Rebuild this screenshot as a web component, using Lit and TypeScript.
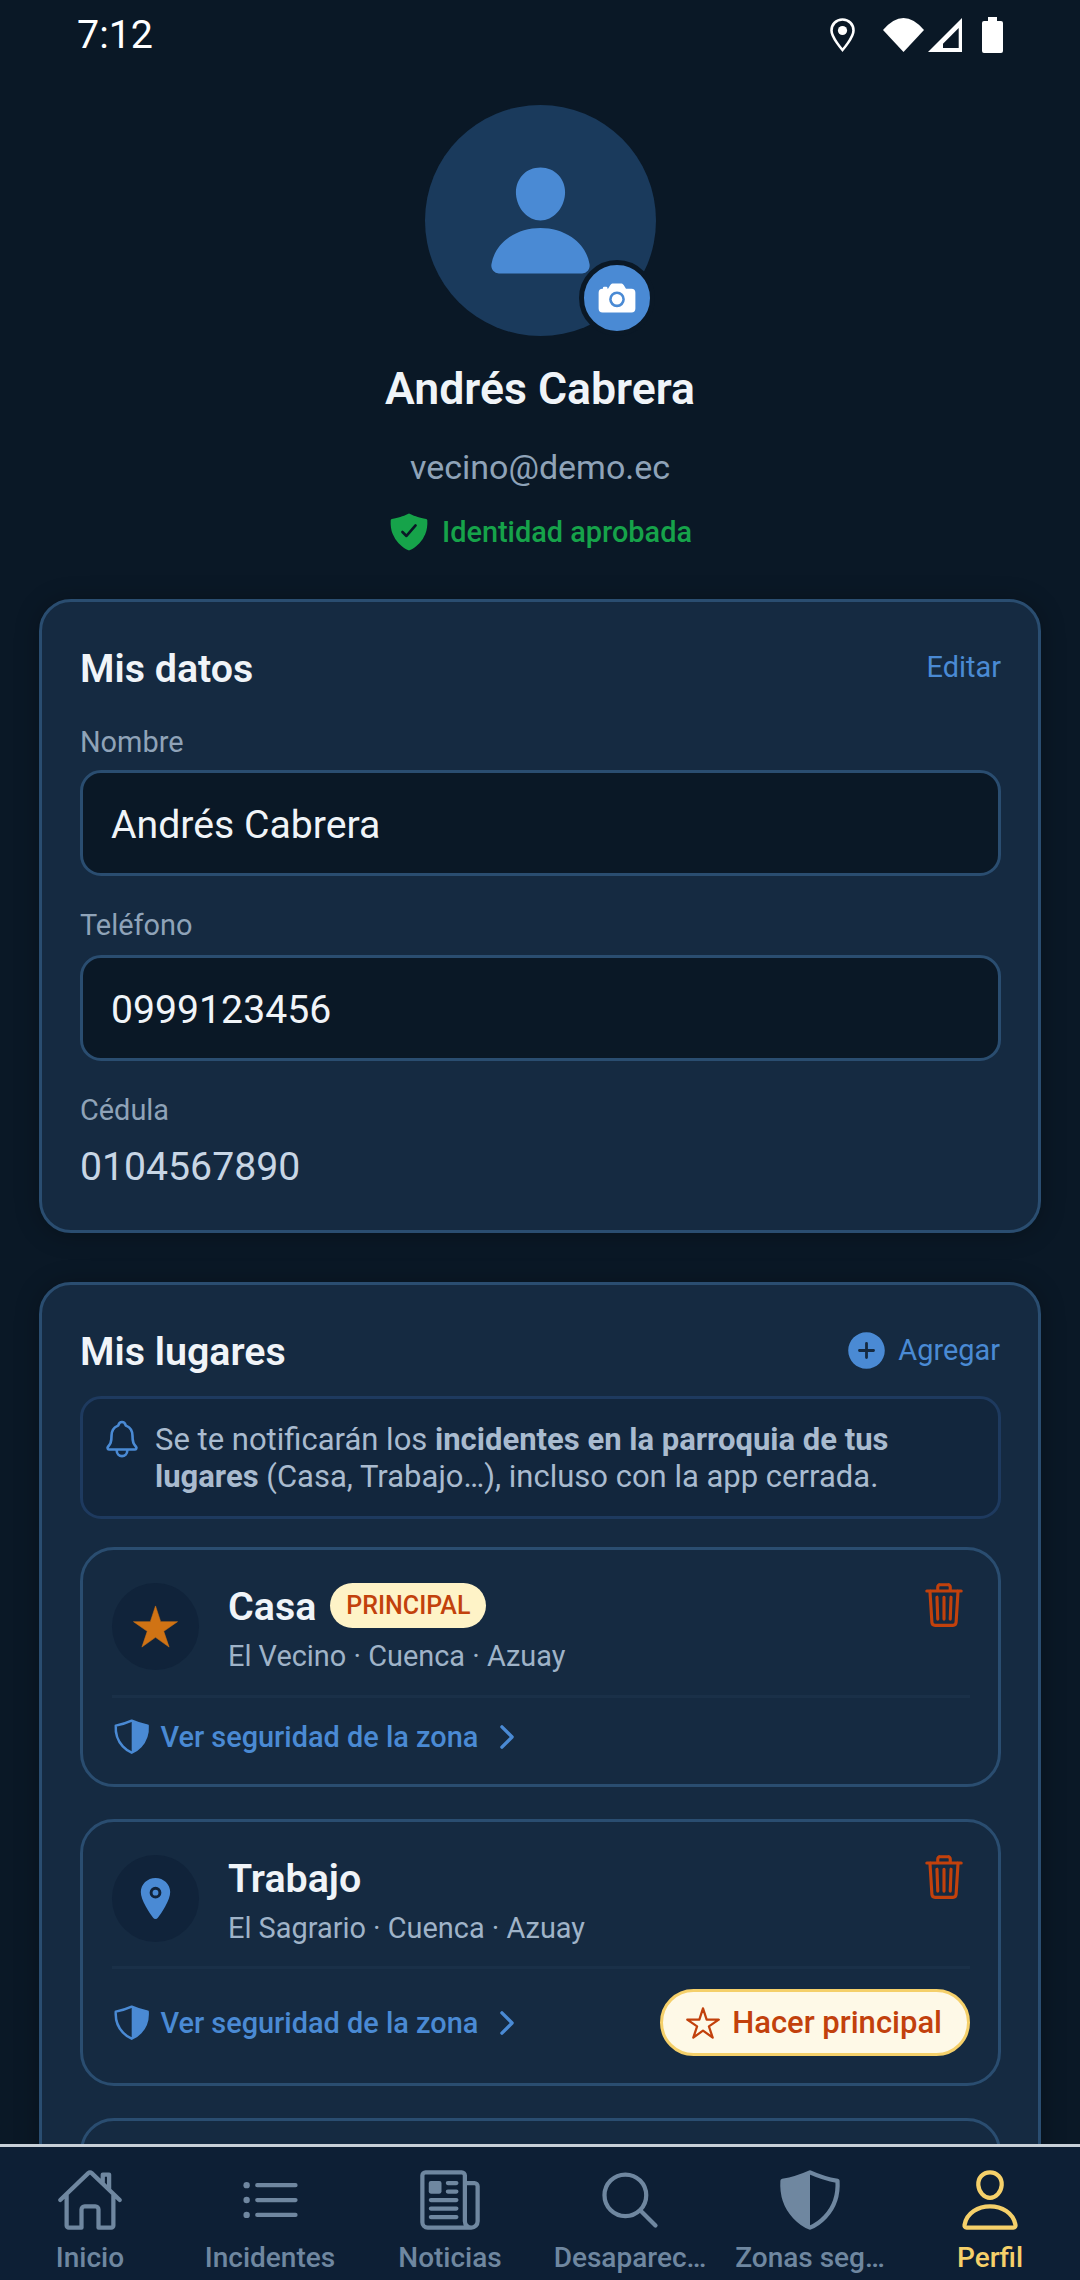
import { LitElement, html, css, svg } from "lit";
import { customElement } from "lit/decorators.js";

const ic = (size: number, body: unknown, cls = "") => html`<svg class="ic ${cls}" width=${size} height=${size} viewBox="0 0 512 512">${body}</svg>`;
const person = svg`<path fill="currentColor" d="M332.64 64.58C313.18 43.57 286 32 256 32c-30.16 0-57.43 11.5-76.8 32.38-19.58 21.11-29.12 49.8-26.88 80.78C156.76 206.28 203.27 256 256 256s99.16-49.71 103.67-110.82c2.27-30.7-7.33-59.33-27.03-80.6zM432 480H80a31 31 0 01-24.2-11.13c-6.5-7.77-9.12-18.38-7.18-29.11C57.06 392.94 83.4 353.61 124.8 326c36.78-24.51 83.37-38 131.2-38s94.42 13.5 131.2 38c41.4 27.6 67.74 66.93 76.18 113.75 1.94 10.73-.68 21.34-7.18 29.11A31 31 0 01432 480z"/>`;
const camera = svg`<circle cx="256" cy="272" r="64" fill="currentColor"/><path fill="currentColor" d="M432 144h-59c-3 0-6.72-1.94-9.62-5l-25.94-40.94a15.52 15.52 0 00-1.37-1.85C327.11 85.76 315 80 302 80h-92c-13 0-25.11 5.76-34.07 16.21a15.52 15.52 0 00-1.37 1.85l-25.94 41c-2.22 2.42-5.34 5-8.62 5v-8a16 16 0 00-16-16h-24a16 16 0 00-16 16v8h-4a48.05 48.05 0 00-48 48V384a48.05 48.05 0 0048 48h352a48.05 48.05 0 0048-48V192a48.05 48.05 0 00-48-48zM256 368a96 96 0 1196-96 96.11 96.11 0 01-96 96z"/>`;
const shieldCheck = svg`<path fill="currentColor" d="M479.07 111.36a16 16 0 00-13.15-14.74c-86.5-15.52-122.61-26.74-203.33-63.2a16 16 0 00-13.18 0C168.69 69.88 132.58 81.1 46.08 96.62a16 16 0 00-13.15 14.74c-3.85 61.11 4.36 118.05 24.43 169.24A349.47 349.47 0 00129 393.11c53.47 56.73 110.24 81.37 121.07 85.73a16 16 0 0012 0c10.83-4.36 67.6-29 121.07-85.73a349.47 349.47 0 0071.5-112.51c20.07-51.19 28.28-108.13 24.43-169.24zm-131 75.11l-110.8 128a16 16 0 01-11.41 5.53h-.66a16 16 0 01-11.2-4.57l-49.2-48.2a16 16 0 1122.4-22.86l37 36.29 99.7-115.13a16 16 0 0124.2 20.94z"/>`;
const addCircle = svg`<path fill="currentColor" d="M256 48C141.31 48 48 141.31 48 256s93.31 208 208 208 208-93.31 208-208S370.69 48 256 48zm80 224h-64v64a16 16 0 01-32 0v-64h-64a16 16 0 010-32h64v-64a16 16 0 0132 0v64h64a16 16 0 010 32z"/>`;
const S = `fill:none;stroke:currentColor;stroke-width:32;stroke-linecap:round;stroke-linejoin:round`;
const bell = svg`<path style=${S} d="M427.68 351.43C402 320 383.87 304 383.87 217.35 383.87 138 343.35 109.73 310 96c-4.43-1.82-8.6-6-9.95-10.55C294.2 65.54 277.8 48 256 48s-38.21 17.55-44 37.47c-1.35 4.6-5.52 8.71-9.95 10.53-33.39 13.75-73.87 41.92-73.87 121.35C128.13 304 110 320 84.32 351.43 73.68 364.45 83 384 101.61 384h308.88c18.51 0 27.77-19.61 17.19-32.57zM320 384v16a64 64 0 01-128 0v-16"/>`;
const trash = svg`<path style=${S} d="M112 112l20 320c.95 18.49 14.4 32 32 32h184c17.67 0 30.87-13.51 32-32l20-320M80 112h352M192 112V72h0a23.93 23.93 0 0124-24h80a23.93 23.93 0 0124 24h0v40M256 176v224M184 176l8 224M328 176l-8 224"/>`;
const star = svg`<path fill="currentColor" stroke="currentColor" stroke-width="6" stroke-linejoin="round" d="M496 203.3H312.36L256 32l-56.36 171.3H16l150.21 105.4L107.9 480 256 373.84 404.1 480l-58.41-171.3z"/>`;
const starOutline = svg`<path style=${S} d="M480 208H308L256 48l-52 160H32l140 96-54 160 138-100 138 100-54-160z"/>`;
const pin = svg`<circle cx="256" cy="192" r="32" fill="currentColor"/><path fill="currentColor" d="M256 32c-88.22 0-160 68.65-160 153 0 40.17 18.31 93.59 54.42 158.78 29 52.34 62.55 99.67 80 123.22a31.75 31.75 0 0051.22 0c17.42-23.55 51-70.88 80-123.22C397.69 278.61 416 225.19 416 185c0-84.35-71.78-153-160-153zm0 224a64 64 0 1164-64 64.07 64.07 0 01-64 64z"/>`;
const chevron = svg`<path style="fill:none;stroke:currentColor;stroke-width:48;stroke-linecap:round;stroke-linejoin:round" d="M184 112l144 144-144 144"/>`;
const shieldHalf = svg`<path style=${S} d="M463.1 112.37C373.68 96.33 336.71 84.45 256 48c-80.71 36.45-117.68 48.33-207.1 64.37C32.7 369.13 240.58 457.79 256 464c15.42-6.21 223.3-94.87 207.1-351.63z"/><path fill="currentColor" d="M256 48c-80.71 36.45-117.68 48.33-207.1 64.37C32.7 369.13 240.58 457.79 256 464z" transform="translate(512 0) scale(-1 1)"/>`;
const shieldHalfLeft = svg`<path style=${S} d="M463.1 112.37C373.68 96.33 336.71 84.45 256 48c-80.71 36.45-117.68 48.33-207.1 64.37C32.7 369.13 240.58 457.79 256 464c15.42-6.21 223.3-94.87 207.1-351.63z"/><path fill="currentColor" d="M256 48c-80.71 36.45-117.68 48.33-207.1 64.37C32.7 369.13 240.58 457.79 256 464z"/>`;
const home = svg`<path style=${S} d="M80 212v236a16 16 0 0016 16h96V328a24 24 0 0124-24h80a24 24 0 0124 24v136h96a16 16 0 0016-16V212M480 256L266.89 52c-5-5.28-16.69-5.34-21.78 0L32 256M400 179V64h-48v69"/>`;
const list = svg`<path style=${S} d="M160 144h288M160 256h288M160 368h288"/><circle cx="80" cy="144" r="24" fill="currentColor"/><circle cx="80" cy="256" r="24" fill="currentColor"/><circle cx="80" cy="368" r="24" fill="currentColor"/>`;
const news = svg`<path style=${S} d="M368 415.86V72a24.07 24.07 0 00-24-24H72a24.07 24.07 0 00-24 24v352a40.12 40.12 0 0040 40h328M416 464h0a48 48 0 01-48-48V128h72a24 24 0 0124 24v264a48 48 0 01-48 48zM240 128h64M240 192h64M112 256h192M112 320h192M112 384h192"/><path fill="currentColor" d="M176 208h-64a16 16 0 01-16-16v-64a16 16 0 0116-16h64a16 16 0 0116 16v64a16 16 0 01-16 16z"/>`;
const search = svg`<path style=${S} d="M221.09 64a157.09 157.09 0 10157.09 157.09A157.1 157.1 0 00221.09 64zM338.29 338.29L448 448"/>`;
const personOutline = svg`<path style=${S} d="M344 144c-3.92 52.87-44 96-88 96s-84.15-43.12-88-96c-4-55 35-96 88-96s92 42 88 96zM256 304c-87 0-175.3 48-191.64 138.6C62.39 453.52 68.57 464 80 464h352c11.44 0 17.62-10.48 15.65-21.4C431.3 352 343 304 256 304z"/>`;

const tabs = [
  { label: "Inicio", icon: home },
  { label: "Incidentes", icon: list },
  { label: "Noticias", icon: news },
  { label: "Desaparec…", icon: search },
  { label: "Zonas seg…", icon: shieldHalfLeft },
  { label: "Perfil", icon: personOutline, active: true },
];

@customElement("app-root")
export class AppRoot extends LitElement {
  static styles = css`
    :host { display: block; width: 1080px; height: 2280px; overflow: hidden; background: #0a1826; font-family: Roboto, "Liberation Sans", sans-serif; color: #fff; }
    * { box-sizing: border-box; }
    .ic { display: block; flex: none; }
    .screen { display: flex; flex-direction: column; height: 2280px; }
    .status { flex: none; height: 70px; display: flex; align-items: center; padding: 0 77px; justify-content: space-between; }
    .time { font-size: 39.4px; line-height: 72px; color: #fff; }
    .sicons { display: flex; align-items: center; gap: 4px; }
    .sicons .loc { margin-right: 24px; }
    .sicons .sig { margin-right: 16px; }
    .main { flex: 1; min-height: 0; overflow: hidden; }
    .profile { display: flex; flex-direction: column; align-items: center; padding-top: 35px; }
    .avatar { position: relative; width: 231px; height: 231px; border-radius: 50%; background: #1a3a5c; color: #4a8ad4; display: flex; align-items: center; justify-content: center; }
    .cam { position: absolute; left: 154px; top: 155px; width: 76px; height: 76px; border-radius: 50%; background: #4a8ad4; border: 5px solid #0a1826; color: #fff; display: flex; align-items: center; justify-content: center; }
    .name { margin-top: 22.5px; font-size: 44.6px; line-height: 60px; font-weight: 600; color: #f0f4f8; }
    .email { margin-top: 25px; font-size: 34px; line-height: 46px; color: #8fa3b8; }
    .verified { margin-top: 21.5px; display: flex; align-items: center; gap: 12px; color: #16a34a; font-size: 28.9px; font-weight: 500; line-height: 42px; }
    .card { margin: 0 39px; background: #152a41; border: 3px solid #2a4d70; border-radius: 32px; padding: 38px 37px 38px 38px; box-shadow: 0 2px 24px rgba(0, 0, 0, 0.28); }
    .card.c1 { margin-top: 46px; }
    .card.c2 { margin-top: 49px; padding-bottom: 0; }
    .head { display: flex; align-items: center; justify-content: space-between; height: 56px; }
    .c2 .head { height: 57px; }
    .title { font-size: 39.4px; font-weight: 600; color: #f0f4f8; }
    .edit { font-size: 28.9px; color: #4a8ad4; margin-top: -2px; }
    .add { display: flex; align-items: center; gap: 9px; font-size: 28.9px; color: #4a8ad4; margin: -3px 1px 0 0; }
    .label { font-size: 28.9px; line-height: 38px; color: #8fa3b8; }
    .label.first { margin-top: 27px; }
    .label.next { margin-top: 30px; }
    .input { margin-top: 9px; height: 106px; border: 3px solid #2a4d70; border-radius: 21px; background: #0a1826; display: flex; align-items: center; padding: 3px 28px 0; font-size: 39.2px; color: #f0f4f8; }
    .next + .input { margin-top: 11px; }
    .value { margin-top: 13px; font-size: 39.2px; line-height: 50px; color: #c8d6e5; }
    .info { margin-top: 16px; display: flex; gap: 12px; align-items: flex-start; background: #12263d; border: 3px solid #1e3a5f; border-radius: 21px; padding: 22px 60px 21px 18px; font-size: 31px; line-height: 37px; color: #a9bbcf; }
    .info .bell { color: #4a8ad4; margin-top: -3px; }
    .info b { font-weight: 700; }
    .places { display: flex; flex-direction: column; gap: 32px; margin-top: 28px; }
    .place { border: 3px solid #2a4d70; border-radius: 34px; padding: 33px 28px 27px 29px; }
    .place.last { height: 120px; }
    .row { display: flex; align-items: flex-start; }
    .circle { flex: none; width: 87px; height: 87px; border-radius: 50%; background: #10233a; display: flex; align-items: center; justify-content: center; color: #4a8ad4; }
    .circle.gold { color: #d07314; }
    .txt { flex: 1; margin-left: 29px; }
    .ptitle { display: flex; align-items: center; gap: 14px; font-size: 39.4px; line-height: 48px; font-weight: 600; color: #f0f4f8; }
    .badge { height: 45px; margin-top: -3px; padding: 0 16px; border-radius: 23px; background: #fef3c7; color: #c2410c; font-size: 25px; font-weight: 500; line-height: 45px; }
    .sub { margin-top: 11px; font-size: 28.9px; line-height: 28px; color: #9fb3c8; }
    .del { color: #c2410c; margin: -3px 1px 0 0; height: 50px; }
    .foot { margin-top: 24.5px; border-top: 3px solid #1a3048; padding-top: 20px; display: flex; align-items: center; justify-content: space-between; }
    .link { display: flex; align-items: center; color: #4a8ad4; font-size: 28.9px; font-weight: 500; height: 39px; }
    .link .t { margin: 0 11px 0 9px; }
    .btn { display: flex; align-items: center; gap: 11px; height: 67px; padding: 0 25px 0 22px; border: 3px solid #f5d06a; border-radius: 34px; background: #fef9e7; color: #c2410c; font-size: 31px; font-weight: 500; }
    .nav { flex: none; height: 136px; border-top: 3px solid #c8d0d8; background: #0d1f35; display: grid; grid-template-columns: repeat(6, 180px); padding-top: 19px; position: relative; }
    .tab { display: flex; flex-direction: column; align-items: center; color: #6f87a0; font-size: 28px; font-weight: 500; white-space: nowrap; }
    .tab.active { color: #f5d06a; }
    .tab span { margin-top: 4px; line-height: 40px; }
  `;

  place(icon: unknown, gold: boolean, name: string, badge: boolean, sub: string, action: boolean) {
    return html`<div class="place">
      <div class="row">
        <div class="circle ${gold ? "gold" : ""}">${ic(47, icon)}</div>
        <div class="txt">
          <div class="ptitle">${name}${badge ? html`<span class="badge">PRINCIPAL</span>` : ""}</div>
          <div class="sub">${sub}</div>
        </div>
        <div class="del">${ic(50, trash)}</div>
      </div>
      <div class="foot">
        <div class="link">${ic(39.4, shieldHalf)}<span class="t">Ver seguridad de la zona</span>${ic(36, chevron)}</div>
        ${action ? html`<div class="btn">${ic(36, starOutline)}Hacer principal</div>` : ""}
      </div>
    </div>`;
  }

  render() {
    return html`<div class="screen">
      <div class="status">
        <div class="time">7:12</div>
        <div class="sicons">
          <svg class="loc" width="25" height="34" viewBox="0 0 25 34"><path d="M12.5 1.5C6 1.5 1.5 6.5 1.5 12.5 1.5 19.5 12.5 32 12.5 32S23.5 19.5 23.5 12.5C23.5 6.5 19 1.5 12.5 1.5Z" fill="none" stroke="#fff" stroke-width="2.6"/><circle cx="12.5" cy="12.5" r="4.6" fill="#fff"/></svg>
          <svg width="41" height="34" viewBox="0 0 41 34"><path d="M20.5 34L0 12Q20.5-12 41 12Z" fill="#fff"/></svg>
          <svg class="sig" width="34" height="34" viewBox="0 0 34 34"><path fill="#fff" fill-rule="evenodd" d="M34 0V34H0ZM30.7 10V30H15V25.7Z"/></svg>
          <svg width="21" height="36" viewBox="0 0 21 36"><path fill="#fff" d="M6 0H15V4H19Q21 4 21 6V34Q21 36 19 36H2Q0 36 0 34V6Q0 4 2 4H6Z"/></svg>
        </div>
      </div>
      <div class="main">
        <div class="profile">
          <div class="avatar">${ic(121, person)}<div class="cam">${ic(42, camera)}</div></div>
          <div class="name">Andrés Cabrera</div>
          <div class="email">vecino@demo.ec</div>
          <div class="verified">${ic(42, shieldCheck)}Identidad aprobada</div>
        </div>
        <section class="card c1">
          <div class="head"><div class="title">Mis datos</div><div class="edit">Editar</div></div>
          <div class="label first">Nombre</div>
          <div class="input">Andrés Cabrera</div>
          <div class="label next">Teléfono</div>
          <div class="input">0999123456</div>
          <div class="label next">Cédula</div>
          <div class="value">0104567890</div>
        </section>
        <section class="card c2">
          <div class="head"><div class="title">Mis lugares</div><div class="add">${ic(45, addCircle)}Agregar</div></div>
          <div class="info"><span class="bell">${ic(42, bell)}</span><div>Se te notificarán los <b>incidentes en la parroquia de tus lugares</b> (Casa, Trabajo…), incluso con la app cerrada.</div></div>
          <div class="places">
            ${this.place(star, true, "Casa", true, "El Vecino · Cuenca · Azuay", false)}
            ${this.place(pin, false, "Trabajo", false, "El Sagrario · Cuenca · Azuay", true)}
            <div class="place last"></div>
          </div>
        </section>
      </div>
      <nav class="nav">
        ${tabs.map((t) => html`<div class="tab ${t.active ? "active" : ""}">${ic(68, t.icon)}<span>${t.label}</span></div>`)}
      </nav>
    </div>`;
  }
}
